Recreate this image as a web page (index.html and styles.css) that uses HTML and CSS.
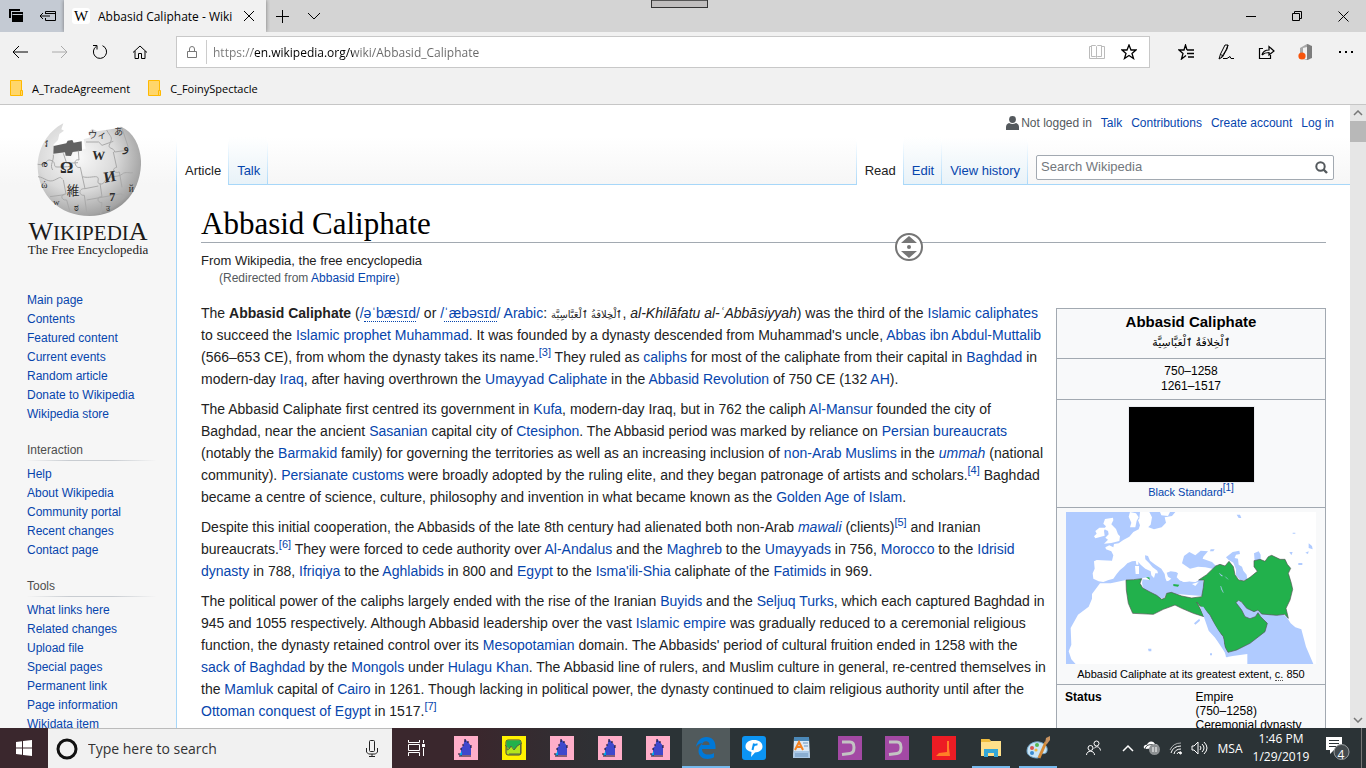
FILE: index.html
```html
<!DOCTYPE html>
<html lang="en">
<head>
<meta charset="utf-8">
<title>Abbasid Caliphate - Wikipedia</title>
<link rel="stylesheet" href="styles.css">
</head>
<body>
<svg class="defs" aria-hidden="true">
  <symbol id="knight" viewBox="0 0 24 24"><rect width="24" height="24" fill="#ffaec9"/><path d="M7 19V12l2-2 2-7 3 3 3 4v9z" fill="#3f48cc"/><path d="M5 19l3-4v5z" fill="#00a2e8"/><path d="M5 20h12M7 12v2M9 8v2M11 3v3M14 5v2M17 9v3M5 17v2" stroke="#112" fill="none"/></symbol>
  <symbol id="hook" viewBox="0 0 24 24"><rect width="24" height="24" fill="#a349a4"/><path d="M4 6h8q4 0 4 5.500t-4 6l-8 1" fill="none" stroke="#c3c3c3" stroke-width="3"/></symbol>
</svg>

<header class="browser">
  <div class="tabstrip">
    <div class="tab-actions">
      <button class="tab-tool" aria-label="Tabs you've set aside"><svg width="16" height="16" viewBox="0 0 16 16"><path d="M1 1h11v2H3v7H1zM4 4h11v10H4z"/><path d="M3 3.500h9M4.500 6.500h10" stroke="#c5cbd4"/></svg></button>
      <button class="tab-tool" aria-label="Set these tabs aside"><svg width="18" height="14" viewBox="0 0 18 14" class="line"><path d="M6.500 5V2.500h10v9h-10V9M6.500 4.500h10M1 7h10M4 4L1 7l3 3"/></svg></button>
    </div>
    <div class="tab">
      <span class="favicon">W</span>
      <span class="tab-title">Abbasid Caliphate - Wikipedia</span>
      <button class="tab-close" aria-label="Close tab"><svg width="12" height="12" viewBox="0 0 12 12" class="line"><path d="M1 1l10 10M11 1L1 11"/></svg></button>
    </div>
    <button class="tab-tool" aria-label="New tab"><svg width="14" height="14" viewBox="0 0 14 14" class="line"><path d="M7.500 1v13M1 7.500h13"/></svg></button>
    <button class="tab-tool" aria-label="Show tab previews"><svg width="14" height="8" viewBox="0 0 14 8" class="line"><path d="M1 1l6 6 6-6"/></svg></button>
    <div class="window-buttons">
      <button aria-label="Minimize"><svg width="10" height="10" viewBox="0 0 10 10" class="line"><path d="M0 5.500h10"/></svg></button>
      <button aria-label="Restore"><svg width="11" height="11" viewBox="0 0 11 11" class="line"><path d="M.5 2.500h7v7h-7zM2.500 2V.5h7v7H8"/></svg></button>
      <button aria-label="Close"><svg width="11" height="11" viewBox="0 0 11 11" class="line"><path d="M.5.5l10 10M10.500.5l-10 10"/></svg></button>
    </div>
    <span class="grip"></span>
  </div>

  <div class="toolbar">
    <button class="tool" aria-label="Back"><svg width="16" height="14" viewBox="0 0 16 14" class="line"><path d="M1 7h15M7 1L1 7l6 6"/></svg></button>
    <button class="tool dim" aria-label="Forward"><svg width="16" height="14" viewBox="0 0 16 14" class="line"><path d="M0 7h15M9 1l6 6-6 6"/></svg></button>
    <button class="tool" aria-label="Refresh"><svg width="16" height="16" viewBox="0 0 16 16" class="line"><path d="M10.500 1.700A6.600 6.600 0 1 1 4.500 2.200M1 1.500h4v4"/></svg></button>
    <button class="tool" aria-label="Home"><svg width="16" height="16" viewBox="0 0 16 16" class="line"><path d="M1 8.500L8 2l7 6.500M3 7v7.500h3.500v-5h3v5H13V7"/></svg></button>
    <form class="address">
      <svg width="12" height="14" viewBox="0 0 12 14" class="line lock"><path d="M1.500 6.500h9v6h-9zM3.500 6V4a2.500 2.500 0 0 1 5 0v2"/></svg>
      <input class="url" type="text" aria-label="Address" value="https://en.wikipedia.org/wiki/Abbasid_Caliphate">
      <button type="button" class="addr-btn faint" aria-label="Reading view"><svg width="16" height="14" viewBox="0 0 16 14" class="line"><path d="M.5 1.500h2v-1h4l1 1 1-1h4v1h3v12H.5zM2.500 1v10.500h4l1 1 1-1h4V1M7.500 2v10"/></svg></button>
      <button type="button" class="addr-btn" aria-label="Add to favorites"><svg width="16" height="16" viewBox="0 0 16 16" class="line bold"><path d="M8 1l2 5h5l-4 3.500 1.500 5L8 11.500l-4.500 3 1.500-5L1 6h5z"/></svg></button>
    </form>
    <button class="tool" aria-label="Favorites hub"><svg width="17" height="16" viewBox="0 0 17 16" class="line bold"><path d="M9 6L7.500 1 6 6H1l4 3.500L3.500 15 8 11.500M9 6h7M9 9.500h7M10 13h6"/></svg></button>
    <button class="tool" aria-label="Add notes"><svg width="17" height="16" viewBox="0 0 17 16" class="line"><path d="M1 15l1.500-5L7 1l3 0L9 5l-4.500 8L1 15M2.500 10l2 2M10 1L8 6l-5 8M5 14.500h4l3-2 1 2h3"/></svg></button>
    <button class="tool" aria-label="Share"><svg width="17" height="16" viewBox="0 0 17 16" class="line"><path d="M5 4.500H1.500v10h11V11M4 11c1-4 3-5 7-5V2.500L16 7l-5 4V8.500c-4 0-5 .5-7 2.500" stroke-width="1.200"/></svg></button>
    <button class="tool" aria-label="Office"><svg width="16" height="17" viewBox="0 0 16 17"><path d="M2 4l7-4 3 1v14l-3 1-4-1 4 0V3L5 4v5H2z" fill="#a8a8a8"/><path d="M9 0l5 2v12l-5 2z" fill="#7d7d7d"/><circle cx="4" cy="12" r="3.600" fill="#f7540b"/></svg></button>
    <button class="tool" aria-label="Settings and more"><svg width="16" height="4" viewBox="0 0 16 4"><path d="M1 1h2v2H1zM7 1h2v2H7zM13 1h2v2h-2z"/></svg></button>
  </div>

  <nav class="favorites" aria-label="Favorites bar">
    <a href="#"><svg width="14" height="16" viewBox="0 0 14 16"><path d="M1.500.500h11v15h-11z" fill="#ffd66b" stroke="#ffb900"/><path d="M11.500 10.500h2v5h-2z" fill="#ffd66b" stroke="#ffb900"/></svg>A_TradeAgreement</a>
    <a href="#"><svg width="14" height="16" viewBox="0 0 14 16"><path d="M1.500.500h11v15h-11z" fill="#ffd66b" stroke="#ffb900"/><path d="M11.500 10.500h2v5h-2z" fill="#ffd66b" stroke="#ffb900"/></svg>C_FoinySpectacle</a>
  </nav>
</header>

<div class="viewport">
  <div class="page">
    <aside class="sidebar">
      <a class="logo" href="#" aria-label="Wikipedia main page">
        <svg class="globe" viewBox="105 66 318 288" width="106" height="96">
          <defs><radialGradient id="ball" cx=".38" cy=".36" r=".75"><stop offset="0" stop-color="#fafafa"/><stop offset=".5" stop-color="#dadada"/><stop offset=".85" stop-color="#a4a4a4"/><stop offset="1" stop-color="#707070"/></radialGradient></defs>
          <path d="M190 70l-6 18 8 4-14 10-4 18-14 14 6 8-4 14h10c20-8 60-6 85-10l-6-28 20-6-8-14 14-12 14 8 50-8 22-6c40 16 62 66 60 114-4 90-68 153-154 154C176 347 116 284 113 203 112 150 140 96 190 70z" fill="url(#ball)"/>
          <path d="M161 138l38-8 4-8 14-2 4 8 24-4 1 28-28 4-5 12-16-1-2-10-35 4z" fill="#626262"/>
          <g fill="none" stroke="#a9a9a9" stroke-width="3">
            <path d="M113 193c30 6 22-18 40-12s4 20 18 20 30 0 40-2M235 152l2 28c-20-5-12 28 4 22l6 28c20 6 40-4 46 2s-6 18 8 20 12-16 28-20 30-2 38-10 24-2 32-4"/>
            <path d="M114 230c20 2 30 20 50 10s16-10 24-2M160 164c2 20-12 30-2 46M247 230l8 36c-20-2-20 22-2 20l8 58M300 250l6 40c-20 0-12 20 0 18l-4 34M255 266l40-8M260 300l100-18c20 0 12 20 0 14M190 240l8 42c-18 0-16 20 2 18l10 36M150 290l44-6M190 160l10 30 34-2M320 90c10 20 20 20 10 40s12 10 14 26l42-6M340 156l10 46c-18 4-6 20 8 14l8 46M258 126l38 0 10 10 34-12M365 82l20 60"/>
          </g>
          <g fill="#2b2b2b" font-family="Liberation Serif, DejaVu Serif, Noto Sans CJK JP, serif">
            <text x="180" y="219" font-size="50" font-weight="bold">Ω</text><text x="276" y="178" font-size="38" font-weight="bold" transform="rotate(4 276 178)">W</text><text x="314" y="248" font-size="46" font-weight="bold" transform="rotate(-10 314 248)">И</text><text x="200" y="285" font-size="38">維</text><text x="264" y="114" font-size="28">ウィ</text><text x="328" y="304" font-size="36" font-weight="bold">7</text><text x="370" y="152" font-size="40">و</text><text x="342" y="106" font-size="27">あ</text><text x="123" y="202" font-size="28">ര</text><text x="124" y="264" font-size="28">ώ</text><text x="134" y="140" font-size="28">វ</text><text x="386" y="276" font-size="28">й</text><text x="222" y="332" font-size="28">ಠ</text><text x="318" y="334" font-size="22">उ</text><text x="160" y="316" font-size="26">w</text>
          </g>
        </svg>
        <span class="wordmark"><big>W</big>IKIPEDI<big>A</big></span>
        <span class="slogan">The Free Encyclopedia</span>
      </a>
      <nav class="portal"><ul>
        <li><a href="#">Main page</a></li><li><a href="#">Contents</a></li><li><a href="#">Featured content</a></li><li><a href="#">Current events</a></li><li><a href="#">Random article</a></li><li><a href="#">Donate to Wikipedia</a></li><li><a href="#">Wikipedia store</a></li>
      </ul></nav>
      <nav class="portal"><h3>Interaction</h3><ul>
        <li><a href="#">Help</a></li><li><a href="#">About Wikipedia</a></li><li><a href="#">Community portal</a></li><li><a href="#">Recent changes</a></li><li><a href="#">Contact page</a></li>
      </ul></nav>
      <nav class="portal"><h3>Tools</h3><ul>
        <li><a href="#">What links here</a></li><li><a href="#">Related changes</a></li><li><a href="#">Upload file</a></li><li><a href="#">Special pages</a></li><li><a href="#">Permanent link</a></li><li><a href="#">Page information</a></li><li><a href="#">Wikidata item</a></li>
      </ul></nav>
    </aside>

    <div class="main">
      <div class="head">
        <nav class="personal">
          <span class="anon"><svg width="13" height="14" viewBox="0 0 13 14" fill="#54595d"><circle cx="6.500" cy="3.500" r="3.400"/><path d="M0 14v-3q0-3 3-4 3.500 2 7 0 3 1 3 4v3z"/></svg>Not logged in</span>
          <a href="#">Talk</a><a href="#">Contributions</a><a href="#">Create account</a><a href="#">Log in</a>
        </nav>
        <div class="page-tabs">
          <ul class="ns"><li class="selected"><a href="#">Article</a></li><li><a href="#">Talk</a></li></ul>
          <ul class="views"><li class="selected"><a href="#">Read</a></li><li><a href="#">Edit</a></li><li><a href="#">View history</a></li></ul>
          <form class="search">
            <input type="search" placeholder="Search Wikipedia" aria-label="Search Wikipedia">
            <button type="button" aria-label="Go"><svg width="13" height="13" viewBox="0 0 13 13" fill="none" stroke="#54595d" stroke-width="2"><circle cx="5.500" cy="5.500" r="4.200"/><path d="M8.500 8.500l3.500 3.500" stroke-width="2.400"/></svg></button>
          </form>
        </div>
      </div>

      <main class="content">
        <h1>Abbasid Caliphate</h1>
        <div class="site-sub">From Wikipedia, the free encyclopedia</div>
        <div class="redirect">(Redirected from <a href="#">Abbasid Empire</a>)</div>

        <table class="infobox">
          <tr><th colspan="2" class="name">Abbasid Caliphate<div class="native" lang="ar" dir="rtl">ٱلْخِلافَةُ ٱلْعَبَّاسِيَّة</div></th></tr>
          <tr><td colspan="2" class="dates">750–1258<br>1261–1517</td></tr>
          <tr><td colspan="2" class="flag"><div class="flag-image" role="img" aria-label="Black flag"></div><a href="#">Black Standard</a><sup><a href="#">[1]</a></sup></td></tr>
          <tr><td colspan="2" class="map">
            <svg viewBox="48 36 750 456" role="img" aria-label="Map of the Abbasid Caliphate">
              <path fill="#b0cbff" d="M48 36h750v456H48z"/>
              <g fill="#fff">
                <path d="M166 142L178 136 190 142 192 132 206 130 220 120 238 110 250 96 266 88 270 76 264 60 276 50 287 52 283 68 292 80 312 88 335 82 348 68 344 52 366 48 376 36H798V492H790L768 440 754 388 736 382 722 370 712 354 700 343 620 330 560 300 470 270 458 240 446 240 436 246 418 244 402 246 388 240 380 232 384 220 378 216 362 214 350 218 354 230 364 236 356 242 350 244 346 234 344 222 334 206 316 194 300 182 294 168 285 166 286 178 298 190 308 202 322 212 324 220 316 220 312 234 304 226 302 214 286 206 272 194 262 182 246 184 232 190 222 200 210 210 200 222 190 236 176 240 160 246 146 244 130 236 128 220 134 206 132 184 140 180 186 182 190 166 184 154 168 148z"/>
                <path d="M384 214L398 206 420 206 446 198 480 204 500 196 520 240H446L436 246 418 244 402 246 388 240z"/>
                <path d="M165 57l24-4 1 8-6 12 14 14 6 16 6 6-2 14-24 6-22 2 12-12-8-6 10-10-2-10-12-6 6-8-8-8zM148 83l18 0-4 10 2 14-28 8-4-6 8-8-4-8z"/>
                <path d="M240 36l18 4 8 12-6 10-4 20-16 0 4-14-8-18zM298 36l8 16-4 22-14 14-18 0 6-16-8-16 2-20zM330 36h30l-6 12-20-2z"/>
                <path d="M257 180l8 0v14h-6zM255 198h12v24h-10zM276 234l20-2 4 8-22-2zM426 252l20-6-10 12z"/>
                <path d="M150 250l32 0 46-10 50-4-2 14 4 16 50 30 12-2 8-14 106 8 6 30-10 6 20 44 26 48 24 26 6 30 20-4 44-6v38H84l-20-22-8-24 8-20-2-50 22-40 32-24 10-24 0-14z"/>
              </g>
              <path fill="#b0cbff" d="M396 190l6-22 16-12 18 10 16-14 22 2-14 16-2 6 28 10 12 12-4 10-28-6-22-2-24 6zM528 172l20-16 20-4 2 10-12 2-4 10 10 2 2 18 10 6 4 12 10 12 2 16-20 2-14-16 0-18-8-20-14-8zM612 160l14-6 6 10 0 16-18 4zM776 130l10 8 2 10-12-4zM718 156l10 0-4 10zM766 158l10-4-2 8zM745 189h12v6h-12zM482 148h12l-4 6h-10zM560 44h10l4 10h-8zM728 98h8v3h-8zM432 370l16-14 2 6-14 12zM294 446h10v8h-8zM480 460h6v6h-6z"/>
              <path fill="#22b14c" stroke="#555" stroke-width="2" d="M228 240L250 239 275 236 270 250 278 264 300 276 320 286 335 298 345 294 350 280 364 277 395 288 425 294 455 290 460 262 462 240 446 240 470 224 497 198 510 193 525 198 537 184 550 200 555 224 566 240 582 243 600 232 622 214 612 200V182L630 178 645 184 655 170 665 166 690 178 705 178 712 193 722 205 715 220 724 250 728 268 720 300 708 325 715 355 704 343 680 346 635 342 624 330 612 335 590 325 575 306 565 301 558 308 575 330 585 350 600 356 616 350 624 338 632 350 652 370 645 395 600 430 560 450 534 457 525 440 520 410 500 385 480 345 462 325 450 318 440 306 450 325 462 350 430 340 395 325 375 315 340 328 310 343 248 340 235 310 229 270z"/>
              <path d="M288 232l10 0 2 8zM370 252l18 2-4 6-14-2z" fill="#22b14c"/>
              <path d="M450 320l10 0 22 34 22 36 16 26 4 28 10 30-14-24-24-36-20-22-14-40z" fill="#b0cbff"/>
              <path d="M508 220l10 8-4 0zM526 230l8 8zM512 258l8 20-6-10z" fill="#b0cbff" stroke="#b0cbff"/>
            </svg>
            <div>Abbasid Caliphate at its greatest extent, <abbr>c.</abbr> 850</div></td></tr>
          <tr class="status"><th>Status</th><td>Empire<br>(750–1258)<br>Ceremonial dynasty</td></tr>
        </table>

        <p>The <b>Abbasid Caliphate</b> (<a href="#">/<span class="ipa">əˈbæsɪd</span>/</a> or <a href="#">/<span class="ipa">ˈæbəsɪd</span>/</a> <a href="#">Arabic</a>: <span class="arabic" lang="ar" dir="rtl">ٱلْخِلافَةُ ٱلْعَبَّاسِيَّة</span>, <i>al-Khilāfatu al-ʿAbbāsiyyah</i>) was the third of the <a href="#">Islamic caliphates</a> to succeed the <a href="#">Islamic prophet</a> <a href="#">Muhammad</a>. It was founded by a dynasty descended from Muhammad's uncle, <a href="#">Abbas ibn Abdul-Muttalib</a> (566–653 CE), from whom the dynasty takes its name.<sup><a href="#">[3]</a></sup> They ruled as <a href="#">caliphs</a> for most of the caliphate from their capital in <a href="#">Baghdad</a> in modern-day <a href="#">Iraq</a>, after having overthrown the <a href="#">Umayyad Caliphate</a> in the <a href="#">Abbasid Revolution</a> of 750 CE (132 <a href="#">AH</a>).</p>
        <p>The Abbasid Caliphate first centred its government in <a href="#">Kufa</a>, modern-day Iraq, but in 762 the caliph <a href="#">Al-Mansur</a> founded the city of Baghdad, near the ancient <a href="#">Sasanian</a> capital city of <a href="#">Ctesiphon</a>. The Abbasid period was marked by reliance on <a href="#">Persian bureaucrats</a> (notably the <a href="#">Barmakid</a> family) for governing the territories as well as an increasing inclusion of <a href="#">non-Arab Muslims</a> in the <a href="#"><i>ummah</i></a> (national community). <a href="#">Persianate customs</a> were broadly adopted by the ruling elite, and they began patronage of artists and scholars.<sup><a href="#">[4]</a></sup> Baghdad became a centre of science, culture, philosophy and invention in what became known as the <a href="#">Golden Age of Islam</a>.</p>
        <p>Despite this initial cooperation, the Abbasids of the late 8th century had alienated both non-Arab <a href="#"><i>mawali</i></a> (clients)<sup><a href="#">[5]</a></sup> and Iranian bureaucrats.<sup><a href="#">[6]</a></sup> They were forced to cede authority over <a href="#">Al-Andalus</a> and the <a href="#">Maghreb</a> to the <a href="#">Umayyads</a> in 756, <a href="#">Morocco</a> to the <a href="#">Idrisid dynasty</a> in 788, <a href="#">Ifriqiya</a> to the <a href="#">Aghlabids</a> in 800 and <a href="#">Egypt</a> to the <a href="#">Isma'ili-Shia</a> caliphate of the <a href="#">Fatimids</a> in 969.</p>
        <p>The political power of the caliphs largely ended with the rise of the Iranian <a href="#">Buyids</a> and the <a href="#">Seljuq Turks</a>, which each captured Baghdad in 945 and 1055 respectively. Although Abbasid leadership over the vast <a href="#">Islamic empire</a> was gradually reduced to a ceremonial religious function, the dynasty retained control over its <a href="#">Mesopotamian</a> domain. The Abbasids' period of cultural fruition ended in 1258 with the <a href="#">sack of Baghdad</a> by the <a href="#">Mongols</a> under <a href="#">Hulagu Khan</a>. The Abbasid line of rulers, and Muslim culture in general, re-centred themselves in the <a href="#">Mamluk</a> capital of <a href="#">Cairo</a> in 1261. Though lacking in political power, the dynasty continued to claim religious authority until after the <a href="#">Ottoman conquest of Egypt</a> in 1517.<sup><a href="#">[7]</a></sup></p>
      </main>
    </div>
  </div>
  <div class="scrollbar">
    <button aria-label="Scroll up"><svg width="10" height="6" viewBox="0 0 10 6"><path d="M1 5l4-4 4 4"/></svg></button>
    <span class="thumb"></span>
    <button class="down" aria-label="Scroll down"><svg width="10" height="6" viewBox="0 0 10 6"><path d="M1 1l4 4 4-4"/></svg></button>
  </div>
</div>

<svg class="autoscroll" width="30" height="30" viewBox="0 0 30 30" aria-hidden="true"><circle cx="15" cy="15" r="13" fill="#fff" stroke="#767676" stroke-width="2"/><path d="M7 11l8-7 8 7zM7 19l8 7 8-7z" fill="#767676"/><circle cx="15" cy="15" r="2" fill="#767676"/></svg>

<footer class="taskbar">
  <button class="app start" aria-label="Start"><svg width="16" height="16" viewBox="0 0 16 16" fill="#fff"><path d="M0 2l6-.8v6.300H0zM7 1l9-1v7.500H7zM0 8.500h6v6.300L0 14zM7 8.500h9V16l-9-1z"/></svg></button>
  <form class="cortana">
    <svg width="22" height="22" viewBox="0 0 22 22"><circle cx="11" cy="11" r="9" fill="none" stroke="#111" stroke-width="3"/></svg>
    <input type="text" placeholder="Type here to search" aria-label="Type here to search">
    <button type="button" aria-label="Talk to Cortana"><svg width="12" height="17" viewBox="0 0 12 17" class="line"><rect x="3.500" y=".5" width="5" height="11" rx="1"/><path d="M.5 8v4l2 2h7l2-2V8M6 14v2.500M3 16.500h6"/></svg></button>
  </form>
  <button class="app task-view" aria-label="Task View"><svg width="17" height="16" viewBox="0 0 17 16" fill="none" stroke="#fff"><path d="M.5 0v2.500h11V0M.5 16v-3.500h11V16M.5 4.500h11v6H.5zM15.500 0v3M15.500 8v8"/><path d="M14 4h3v3h-3z" fill="#fff" stroke="none"/></svg></button>
  <button class="app" aria-label="App 1"><svg width="24" height="24"><use href="#knight"/></svg></button>
  <button class="app" aria-label="App 2"><svg width="24" height="24" viewBox="0 0 24 24"><path fill="#fff200" d="M0 0h24v24H0z"/><rect x="4" y="4" width="15" height="15" rx="2" fill="#b5e61d" stroke="#444"/><path d="M4.500 4.500h14V8l-3 2-3 4-3-4-2 3-3-3z" fill="#22b14c"/><path d="M3 9l2 2v3l2-1 2-3 3 4 3-4 5-3M18.500 8v10H7" fill="none" stroke="#564"/></svg></button>
  <button class="app" aria-label="App 3"><svg width="24" height="24"><use href="#knight"/></svg></button>
  <button class="app" aria-label="App 4"><svg width="24" height="24"><use href="#knight"/></svg></button>
  <button class="app" aria-label="App 5"><svg width="24" height="24"><use href="#knight"/></svg></button>
  <button class="app active" aria-label="Microsoft Edge"><svg width="20" height="22" viewBox="0 0 20 22"><path fill="#0078d7" d="M0 10C1 4 5 0 10.500 0 16 0 19.500 4 19.500 9.500V12H6c0 4 3 5.500 6 5.500 2.500 0 4.500-.7 6-1.600v4.400C16 21.500 14 22 11.500 22 6 22 2.500 18.500 2.500 14c0-4 2-6.500 5-8C4 6 1.500 7.500 0 10zm6-2h7.500C13.500 5.500 12.300 4.300 10 4.300S6.500 5.500 6 8z"/></svg></button>
  <button class="app" aria-label="Messenger"><svg width="24" height="24" viewBox="0 0 24 24"><rect width="24" height="24" rx="3" fill="#0c94f3"/><path d="M12 4c5 0 8.500 2.500 8.500 6.500S17 16 13 16.500L9 21l.5-5C6 15 3.500 13.500 3.500 10.500 3.500 6.500 7 4 12 4z" fill="#fff"/><path d="M12 7.500L10.500 14M11.500 10q1.500-2 4-1.500" fill="none" stroke="#0c94f3" stroke-width="2"/></svg></button>
  <button class="app" aria-label="WordPad"><svg width="20" height="22" viewBox="0 0 20 22"><path d="M2 1h15l1 20H1z" fill="#dce9f6"/><path d="M2 0h15v4H2z" fill="#4b89b9"/><path d="M2 14h15l1 7H1z" fill="#aac8e6"/><path d="M3 13l4-8 4 8M5 10h4" fill="none" stroke="#f58220" stroke-width="2"/><path d="M11 6h5M12 9h4M3 17h13M3 19h13" stroke="#6b93bc"/></svg></button>
  <button class="app narrow" aria-label="App 6"><svg width="24" height="24"><use href="#hook"/></svg></button>
  <button class="app narrow" aria-label="App 7"><svg width="24" height="24"><use href="#hook"/></svg></button>
  <button class="app narrow" aria-label="App 8"><svg width="24" height="24" viewBox="0 0 24 24"><path fill="#ed1c24" d="M0 0h24v24H0z"/><path d="M15 5h2v7l1 8H4l3-3 8-1z" fill="#ff7f27"/></svg></button>
  <button class="app narrow open" aria-label="File Explorer"><svg width="22" height="20" viewBox="0 0 22 20"><path d="M1 1h8l2 2h10v15H1z" fill="#ffe08a"/><path d="M1 1h8l2 3H1z" fill="#f0bd3d"/><path d="M4 19v-8h14v8h-4v-4H8v4z" fill="#35a8d8"/></svg></button>
  <button class="app narrow open" aria-label="Paint"><svg width="26" height="24" viewBox="0 0 26 24"><path d="M2 15C2 9 8 5 14 6s9 5 8 9-5 2-7 3 1 4-3 4S2 20 2 15z" fill="#c8e4f5" stroke="#6fa6cc"/><circle cx="7" cy="12" r="2" fill="#d9534f"/><circle cx="12" cy="9" r="2" fill="#56b653"/><circle cx="7" cy="17" r="2" fill="#398bd1"/><circle cx="11" cy="14" r="1.600" fill="#edb83d"/><path d="M14 22l7-16" stroke="#d58a36" stroke-width="3"/><path d="M20 7l1-5 4-2 0 4-3 4z" fill="#c99360"/></svg></button>
  <div class="tray">
    <button class="people" aria-label="People"><svg width="15" height="16" viewBox="0 0 15 16"><circle cx="10.500" cy="3.500" r="2.500"/><circle cx="4.500" cy="8" r="2.500"/><path d="M.5 15c0-5 8-5 8 0M8 8.500c2-3 6-2 6.500 2"/></svg></button>
    <button class="small" aria-label="Show hidden icons"><svg width="12" height="8" viewBox="0 0 12 8"><path d="M1 7l5-5 5 5" stroke-width="1.500"/></svg></button>
    <button class="small" aria-label="OneDrive"><svg width="18" height="16" viewBox="0 0 18 16"><path d="M2 9c-3-2 0-5 2-4 1-4 6-5 8-1 3 0 4 2 3 4z" fill="#fff" stroke="none"/><path d="M2 9c1-4 5-5 8-4" stroke="#2b3336"/><circle cx="11.500" cy="9.500" r="5.500" fill="#8d9193" stroke="none"/><path d="M10 7v5M13 7v5"/></svg></button>
    <button class="small" aria-label="Network"><svg width="14" height="14" viewBox="0 0 14 14"><path d="M1 9Q4 2 12 2" opacity=".6"/><path d="M2 12Q4 5 12 5M5 13Q6 8 12 8M8 13q0-2 4-2"/><circle cx="11.500" cy="12" r="1" fill="#fff"/></svg></button>
    <button class="small" aria-label="Volume"><svg width="18" height="14" viewBox="0 0 18 14"><path d="M1 5h2l4-4v12L3 9H1zM9 5q2 2 0 4M11 3q4 4 0 8M13 1q6 6 0 12"/></svg></button>
    <span class="lang">MSA</span>
    <time class="clock">1:46 PM<br>1/29/2019</time>
    <button class="notes" aria-label="4 notifications"><svg width="26" height="26" viewBox="0 0 26 26"><path d="M2 2h16v13H10l-4 4v-4H2z" fill="#fff" stroke="none"/><path d="M5 5.500h10M5 8.500h10M5 11.500h10" stroke="#2b3336"/><circle cx="17.500" cy="17" r="7.500" fill="#434a4d" stroke="#9ca0a2"/></svg><span class="count">4</span></button>
    <span class="peek"></span>
  </div>
</footer>
</body>
</html>
```
FILE: styles.css
```css
* { box-sizing: border-box; }
html, body { height: 100%; }
body { margin: 0; display: flex; flex-direction: column; overflow: hidden; position: relative; font-family: "Liberation Sans", Arial, sans-serif; background: #fff; color: #222; }
button { border: 0; padding: 0; margin: 0; background: none; font: inherit; color: inherit; display: flex; align-items: center; justify-content: center; }
svg { display: block; flex: none; }
ul { list-style: none; margin: 0; padding: 0; }
a { color: #0645ad; text-decoration: none; }
.defs { position: absolute; width: 0; height: 0; }
.line { fill: none; stroke: currentColor; }
.bold { stroke-width: 1.3; }

/* Browser window */
.browser { flex: none; background: #f1f1f1; border-bottom: 1px solid #c6c6c6; font-family: "Open Sans", "Noto Sans", sans-serif; font-size: 12px; color: #000; }
.tabstrip { display: flex; height: 32px; background: #d4d4d4; position: relative; }
.tab-actions { display: flex; background: #c4cad3; }
.tab-tool { width: 32px; }
.tab { display: flex; align-items: center; width: 202px; padding: 0 8px; gap: 8px; background: #f1f1f1; box-shadow: 0 0 4px #777; clip-path: inset(0 -4px 0 -4px); }
.favicon { width: 18px; height: 16px; border-radius: 3px; background: #fff; font: 15px/16px "Liberation Serif", serif; text-align: center; }
.tab-title { flex: 1; overflow: hidden; white-space: nowrap; }
.tab-close { width: 18px; height: 18px; }
.window-buttons { display: flex; margin-left: auto; }
.window-buttons button { width: 46px; }
.grip { position: absolute; left: 50%; top: 0; width: 57px; height: 8px; margin-left: -32px; border: 1px solid #333; border-top: 0; background: linear-gradient(#555 1px, #c0bebe 1px); }
.toolbar { display: flex; height: 40px; padding: 4px 0; }
.tool { width: 40px; }
.dim { color: #aaa; }
.address { flex: 1; display: flex; align-items: center; margin: 0 16px; padding: 0 4px 0 9px; background: #fff; border: 1px solid #c8c8c8; }
.lock { color: #777; margin-right: 8px; }
.url { flex: 1; min-width: 0; height: 24px; padding: 0 0 0 6px; border: 0; border-left: 1px solid #ccc; font: inherit; outline: 0; color: transparent; background: linear-gradient(90deg, #767676 46px, #000 46px, #000 146px, #666 146px) text; }
.addr-btn { width: 32px; height: 30px; }
.faint { color: #bbb; }
.favorites { display: flex; gap: 17px; height: 32px; padding: 0 9px; align-items: center; font-size: 11px; }
.favorites a { display: flex; align-items: center; gap: 9px; color: #000; }

/* Page */
.viewport { flex: 1; min-height: 0; display: flex; overflow: hidden; }
.page { flex: 1; min-width: 0; display: grid; grid-template-columns: 176px minmax(0, 1fr); background: linear-gradient(#fff 40%, #f6f6f6) 0 0 / 100% 80px no-repeat #f6f6f6; overflow: hidden; }
.scrollbar { flex: none; display: flex; flex-direction: column; width: 16px; background: #e6e6e6; }
.scrollbar button { height: 16px; }
.scrollbar path { fill: none; stroke: #777; stroke-width: 1.5; }
.thumb { height: 21px; background: #b8b8b8; }
.down { margin-top: auto; }

.sidebar { font-size: 12px; }
.logo { display: flex; flex-direction: column; align-items: center; color: #1b1b1b; font-family: "Liberation Serif", serif; padding-top: 17px; }
.wordmark { font-size: 21px; line-height: 20px; margin-top: 4px; white-space: nowrap; }
.wordmark big { font-size: 26px; }
.slogan { font-size: 13px; line-height: 14px; }
.portal { padding: 0 20px 0 27px; margin-bottom: 17px; }
.logo + .portal { padding-top: 34px; }
.portal h3 { margin: 0 0 4px; padding-bottom: 1px; font-size: 12px; line-height: 18px; font-weight: normal; color: #4d4d4d; border-bottom: 1px solid #d4d4d4; border-image: linear-gradient(90deg, #f6f6f6, #c8ccd1 33%, #c8ccd1 66%, #f6f6f6) 1; }
.portal li { line-height: 19px; }

.head { display: flex; flex-direction: column; height: 80px; border-bottom: 1px solid #a7d7f9; }
.personal { display: flex; justify-content: flex-end; gap: 9px; padding: 9px 16px 0 0; font-size: 12px; line-height: 18px; }
.anon { display: flex; align-items: center; gap: 2px; color: #54595d; }
.page-tabs { display: flex; height: 48px; margin-top: auto; margin-bottom: -1px; font-size: 13px; }
.page-tabs ul { display: flex; border-left: 1px solid; border-image: linear-gradient(#fff 10%, #a7d7f9) 1; }
.page-tabs li { padding: 26px 7px 0 8px; line-height: 16px; border-right: 1px solid; border-image: linear-gradient(#fff 10%, #a7d7f9) 1; background: linear-gradient(#fff, #e8f2f8); background-clip: padding-box; box-shadow: inset 0 -1px #a7d7f9; }
.page-tabs .selected { background: #fff; box-shadow: none; }
.page-tabs .selected a { color: #222; }
.views { margin-left: auto; }
.search { display: flex; align-self: flex-start; width: 298px; height: 25px; margin: 18px 16px 0 8px; background: #fff; border: 1px solid #a2a9b1; border-radius: 2px; }
.search input { flex: 1; min-width: 0; border: 0; padding: 0 4px 2px; font: 13px "Liberation Sans", sans-serif; background: none; outline: 0; }
.search input::placeholder { color: #72777d; }
.search button { width: 23px; }

.content { background: #fff; border-left: 1px solid #a7d7f9; padding: 19px 24px 0; font-size: 14px; line-height: 22px; min-height: 100%; }
h1 { margin: 0; padding-top: 2px; font: 31px/36px "Liberation Serif", Georgia, serif; color: #000; border-bottom: 1px solid #a2a9b1; }
.site-sub { font-size: 13px; line-height: 20px; margin-top: 8px; }
.redirect { font-size: 12px; line-height: 14px; margin-left: 18px; color: #54595d; }
.content p { margin: 0 0 8px; }
.redirect ~ p:first-of-type { margin-top: 17px; }
sup { font-size: 11px; line-height: 1; }
.ipa { border-bottom: 1px dotted #0645ad; }
.arabic { font-family: "DejaVu Sans", sans-serif; font-size: 10px; line-height: 1; }
.infobox { float: right; width: 270px; margin: 23px 0 0 8px; border: 1px solid #a2a9b1; border-collapse: collapse; background: #f8f9fa; font-size: 12px; line-height: 15px; color: #000; }
.infobox td, .infobox th { padding: 0; vertical-align: top; text-align: center; }
.infobox tr + tr { border-top: 1px solid #a2a9b1; }
.infobox .name { padding: 3px 0 4px; font-size: 15px; line-height: 20px; }
.native { font: 11px/22px "DejaVu Sans", sans-serif; }
.infobox .dates { padding: 5px 0; }
.infobox .flag { font-size: 11px; line-height: 18px; padding: 6px 0; }
.flag-image { width: 127px; height: 77px; margin: 0 auto; background: #000; border: 1px solid #eaecf0; }
.infobox .flag sup { font-size: 10px; }
.infobox .map { padding: 4px 9px 1px; font-size: 11px; line-height: 18px; white-space: nowrap; }
.map svg { width: 100%; height: auto; margin-bottom: 1px; }
abbr { border-bottom: 1px dotted #555; }
.infobox .status th, .infobox .status td { padding: 5px 8px; text-align: left; line-height: 14px; }
.infobox .status th { width: 131px; }
.infobox .status td { white-space: nowrap; }

.autoscroll { position: absolute; left: 894px; top: 232px; }

/* Taskbar */
.taskbar { flex: none; display: flex; height: 40px; background: linear-gradient(90deg, #3a272d 35%, #2b3336 46%); color: #fff; font-family: "Open Sans", "Noto Sans", sans-serif; }
.app { width: 48px; }
.narrow { width: 47px; }
.task-view { width: 50px; padding-right: 2px; }
.active { background: #515a5c; border-bottom: 2px solid #76b9ed; padding-top: 2px; }
.open { background: linear-gradient(#76b9ed, #76b9ed) bottom / 38px 2px no-repeat; }
.cortana { display: flex; align-items: center; width: 344px; padding: 0 8px; gap: 8px; background: #f1f1f1; border-top: 1px solid #bbb; color: #222; }
.cortana input { flex: 1; min-width: 0; border: 0; padding: 0 2px; background: none; font: 14px "Open Sans", "Noto Sans", sans-serif; outline: 0; }
.cortana input::placeholder { color: #333; }
.cortana button { width: 24px; height: 32px; }
.tray { display: flex; align-items: center; margin-left: auto; font-size: 12px; }
.tray button { height: 40px; position: relative; }
.tray button svg { fill: none; stroke: #fff; }
.people { width: 46px; }
.small { width: 24px; }
.lang { width: 36px; text-align: center; }
.clock { width: 66px; text-align: center; line-height: 18px; }
.notes { width: 47px; padding-right: 1px; }
.count { position: absolute; left: 21px; top: 18px; width: 12px; font-size: 12px; line-height: 18px; text-align: center; }
.peek { width: 5px; height: 40px; border-left: 1px solid #777; }
```
